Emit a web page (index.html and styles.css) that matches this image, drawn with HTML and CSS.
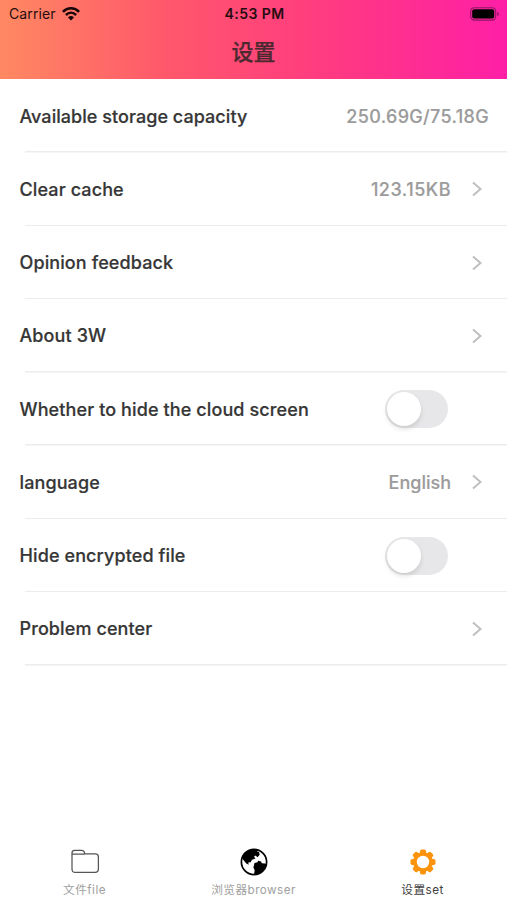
FILE: index.html
```html
<!DOCTYPE html>
<html lang="en">
<head>
<meta charset="utf-8">
<meta name="viewport" content="width=device-width, initial-scale=1">
<title>设置</title>
<link rel="stylesheet" href="styles.css">
</head>
<body>
<div class="screen">
  <header class="header">
    <div class="status">
      <div class="carrier"><span>Carrier</span>
        <svg width="18" height="14" viewBox="0 0 18 14" fill="none" stroke="#160608" stroke-width="2.5"><path d="M.9 4.900C5.500.1 12.500.1 17.100 4.900M3.900 8C7 5 11 5 14.100 8"/><path d="M9 13.600 6 10.400Q9 7.800 12 10.400Z" fill="#160608" stroke="none"/></svg>
      </div>
      <time class="time">4:53 PM</time>
      <svg class="battery" width="30" height="14" viewBox="0 0 30 14"><rect x=".7" y=".7" width="25" height="12.400" rx="3.600" fill="none" stroke="#8d1763" stroke-width="1.100"/><rect x="2.200" y="2.300" width="22" height="9.200" rx="2" fill="#000"/><path d="M27.300 5q1.700.5 1.700 2t-1.700 2z" fill="#8d1763"/></svg>
    </div>
    <h1 class="title">设置</h1>
  </header>
  <main class="list">
    <div class="row"><span class="label storage">Available storage capacity</span><span class="value number">250.69G/75.18G</span></div>
    <div class="row"><span class="label">Clear cache</span><span class="value cache">123.15KB</span><svg class="chevron" viewBox="0 0 12 16"><path d="m2 1.500 7.500 6.500L2 14.500"/></svg></div>
    <div class="row"><span class="label">Opinion feedback</span><svg class="chevron" viewBox="0 0 12 16"><path d="m2 1.500 7.500 6.500L2 14.500"/></svg></div>
    <div class="row"><span class="label">About 3W</span><svg class="chevron" viewBox="0 0 12 16"><path d="m2 1.500 7.500 6.500L2 14.500"/></svg></div>
    <div class="row"><span class="label">Whether to hide the cloud screen</span><span class="switch"></span></div>
    <div class="row"><span class="label">language</span><span class="value">English</span><svg class="chevron" viewBox="0 0 12 16"><path d="m2 1.500 7.500 6.500L2 14.500"/></svg></div>
    <div class="row"><span class="label">Hide encrypted file</span><span class="switch"></span></div>
    <div class="row"><span class="label">Problem center</span><svg class="chevron" viewBox="0 0 12 16"><path d="m2 1.500 7.500 6.500L2 14.500"/></svg></div>
  </main>
  <nav class="tabs">
    <div class="tab">
      <svg width="30" height="28" viewBox="0 0 30 28" fill="none" stroke="#555" stroke-width="1.250"><path d="M2 6V5q0-2.700 2.700-2.700h7q2.300 0 2.700 2.200l.2 1.300h10.700q3.100 0 3.100 3.100v12.200q0 3.300-3.300 3.300H5.300Q2 24.400 2 21.100ZM2 6h12.600"/></svg>
      <span>文件file</span>
    </div>
    <div class="tab">
      <svg width="28" height="28" viewBox="0 0 28 28"><circle cx="14" cy="14" r="12.600" fill="#fff" stroke="#000" stroke-width="1.700"/><path d="M4 5Q8 1.500 14 1.400l4.500.8-1.500 1.300 2 .3.700 3-2.200 2.500-2-1.800-1.500 1.300 1.500 1.700-3.500 1.200-1.500 2.600-2.300.3.600 2.200-2.800-1.500-2.800-3.500L2 9ZM14.500 15l3-.7.600-1.600 3 .8.700 1.700 3.500.3 1.500 1.500-1.500 4.200-4 3.800-3.800 1.300-3.400-.3.600-3.700-1.300-2.800Z" fill="#000"/></svg>
      <span>浏览器browser</span>
    </div>
    <div class="tab active">
      <svg width="28" height="28" viewBox="0 0 28 28"><g fill="#fb930b"><rect x="11" y="1.500" width="6" height="25" rx="1.700"/><rect x="11" y="1.500" width="6" height="25" rx="1.700" transform="rotate(45 14 14)"/><rect x="11" y="1.500" width="6" height="25" rx="1.700" transform="rotate(90 14 14)"/><rect x="11" y="1.500" width="6" height="25" rx="1.700" transform="rotate(135 14 14)"/><circle cx="14" cy="14" r="10"/></g><circle cx="14" cy="14" r="6.200" fill="#fff"/></svg>
      <span>设置set</span>
    </div>
  </nav>
</div>
</body>
</html>
```
FILE: styles.css
```css
* { box-sizing: border-box; }
body { margin: 0; background: #fff; font-family: Inter, "Noto Sans CJK SC", sans-serif; }
.screen { width: 507px; height: 900px; display: flex; flex-direction: column; overflow: hidden; }
.header { height: 79.2px; flex: none; background: linear-gradient(90deg, #ff8962 0%, #ff576b 33%, #ff3982 66%, #ff1fa6 100%); }
.status { height: 27px; padding: 0 7px 0 9px; display: grid; grid-template-columns: 1fr auto 1fr; align-items: center; color: #260c10; }
.carrier { display: flex; align-items: center; gap: 6px; font-size: 14px; letter-spacing: .1px; }
.time { font-size: 14px; font-weight: 600; letter-spacing: .45px; }
.battery { justify-self: end; }
.title { margin: 7px 0 0; font-size: 22px; line-height: 36px; font-weight: 500; text-align: center; color: #4c2930; -webkit-text-stroke: .25px; }
.list { padding-top: .3px; }
.row { height: 73.28px; padding: 0 18px 0 19.5px; display: flex; align-items: center; background: linear-gradient(#ececee, #ececee) 25px 100% / 482px 1.5px no-repeat; }
.label { flex: 1; font-size: 18px; font-weight: 500; letter-spacing: .11px; color: #363636; white-space: nowrap; -webkit-text-stroke: .2px; }
.storage { letter-spacing: .05px; }
.value { font-size: 18px; font-weight: 500; color: #9b9b9b; white-space: nowrap; -webkit-text-stroke: .15px; }
.number { letter-spacing: .33px; }
.cache { letter-spacing: .5px; }
.chevron { width: 12px; height: 16px; margin: 0 6px 0 20px; fill: none; stroke: #bfbfc1; stroke-width: 2; }
.switch { width: 63px; height: 38px; margin-right: 41.5px; padding: 2px; border-radius: 19px; background: #e7e7e9; }
.switch::before { content: ""; display: block; width: 34px; height: 34px; border-radius: 50%; background: #fff; box-shadow: 0 3px 5px rgba(0, 0, 0, .12); }
.tabs { margin-top: auto; height: 52px; flex: none; display: grid; grid-template-columns: repeat(3, 1fr); }
.tab { display: flex; flex-direction: column; align-items: center; gap: 5px; font-size: 11.7px; letter-spacing: .45px; line-height: 18px; color: #a0a0a0; }
.tab svg { flex: none; }
.active { color: #404040; }
```
